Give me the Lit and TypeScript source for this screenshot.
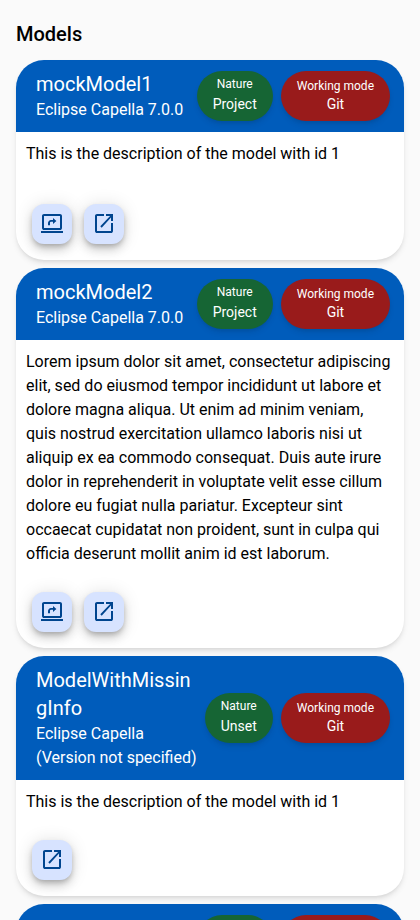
import { LitElement, html, css, svg } from "lit";
import { customElement, property } from "lit/decorators.js";

interface Model {
  name: string;
  tool: string;
  nature: string;
  mode: string;
  description: string;
  diagrams: boolean;
}

const LOREM =
  "Lorem ipsum dolor sit amet, consectetur adipiscing elit, sed do eiusmod tempor incididunt ut labore et dolore magna aliqua. Ut enim ad minim veniam, quis nostrud exercitation ullamco laboris nisi ut aliquip ex ea commodo consequat. Duis aute irure dolor in reprehenderit in voluptate velit esse cillum dolore eu fugiat nulla pariatur. Excepteur sint occaecat cupidatat non proident, sunt in culpa qui officia deserunt mollit anim id est laborum.";

const MODELS: Model[] = [
  { name: "mockModel1", tool: "Eclipse Capella 7.0.0", nature: "Project", mode: "Git", description: "This is the description of the model with id 1", diagrams: true },
  { name: "mockModel2", tool: "Eclipse Capella 7.0.0", nature: "Project", mode: "Git", description: LOREM, diagrams: true },
  { name: "ModelWithMissingInfo", tool: "Eclipse Capella (Version not specified)", nature: "Unset", mode: "Git", description: "This is the description of the model with id 1", diagrams: false },
  { name: "", tool: "", nature: "Project", mode: "Git", description: "", diagrams: false },
];

const screenShare = svg`<path d="M4 18q-.8 0-1.400-.6T2 16V4q0-.8.6-1.400T4 2h16q.8 0 1.400.6T22 4v12q0 .8-.6 1.400T20 18H4Zm0-2h16V4H4v12ZM1 21v-2h22v2H1ZM8 13.300h2v-2.500q0-.4.300-.7t.7-.3h2v2.200l3.400-3-3.400-3v2h-2q-1.250 0-2.120.88T8 11v2.300Z"/>`;
const openInNew = svg`<path d="M5 21q-.8 0-1.400-.6T3 19V4q0-.8.6-1.400T5 2h7v2H5v15h14v-8h2v8q0 .8-.6 1.400T19 21H5Zm4.700-5.300L8.300 14.300 18.100 4H14V2h7v7h-2V5.400L9.700 15.700Z"/>`;

@customElement("model-card")
export class ModelCard extends LitElement {
  @property({ attribute: false }) model!: Model;

  static styles = css`
    :host {
      display: flex;
      flex-direction: column;
      min-height: 200px;
      border-radius: 28px;
      overflow: hidden;
      background: #fff;
      box-shadow: 0 4px 6px -1px rgba(0, 0, 0, 0.1), 0 2px 4px -2px rgba(0, 0, 0, 0.1);
    }
    .header {
      display: flex;
      align-items: center;
      gap: 8px;
      min-height: 52px;
      padding: 10px 14px 10px 20px;
      background: #005cbb;
      color: #fff;
    }
    .heading {
      flex: 1;
      min-width: 0;
      overflow-wrap: anywhere;
    }
    .name {
      font-size: 20px;
      line-height: 28px;
    }
    .tool {
      font-size: 16px;
      line-height: 24px;
    }
    .pill {
      display: flex;
      flex-direction: column;
      align-items: center;
      justify-content: flex-end;
      box-sizing: border-box;
      height: 50px;
      padding: 0 16px 7px;
      border-radius: 25px;
      font-size: 14px;
      line-height: 20px;
      white-space: nowrap;
      box-shadow: 0 4px 6px -1px rgba(0, 0, 0, 0.1), 0 2px 4px -2px rgba(0, 0, 0, 0.1);
    }
    .label {
      font-size: 12px;
      line-height: 16px;
    }
    .nature {
      background: #166534;
    }
    .nature .label {
      margin-bottom: 2px;
    }
    .mode {
      background: #991b1b;
    }
    .description {
      flex: 1;
      padding: 10px;
      font-size: 16px;
      line-height: 24px;
      color: #000;
    }
    .actions {
      display: flex;
      gap: 12px;
      padding: 16px;
    }
    .action {
      display: grid;
      place-items: center;
      width: 40px;
      height: 40px;
      padding: 0;
      border: 0;
      border-radius: 12px;
      background: #d7e3ff;
      color: #00458f;
      box-shadow: 0 3px 5px -1px rgba(0, 0, 0, 0.2), 0 6px 10px rgba(0, 0, 0, 0.14), 0 1px 18px rgba(0, 0, 0, 0.12);
    }
    .icon {
      display: block;
      width: 24px;
      height: 24px;
      fill: currentColor;
    }
  `;

  private action(label: string, glyph: unknown) {
    return html`<button class="action" aria-label=${label}>
      <svg class="icon" viewBox="0 0 24 24">${glyph}</svg>
    </button>`;
  }

  render() {
    const m = this.model;
    return html`
      <div class="header">
        <div class="heading">
          <div class="name">${m.name}</div>
          <div class="tool">${m.tool}</div>
        </div>
        <div class="pill nature"><span class="label">Nature</span><span>${m.nature}</span></div>
        <div class="pill mode"><span class="label">Working mode</span><span>${m.mode}</span></div>
      </div>
      <div class="description">${m.description}</div>
      <div class="actions">
        ${m.diagrams ? this.action("View diagrams", screenShare) : null}
        ${this.action("Open", openInNew)}
      </div>
    `;
  }
}

@customElement("app-root")
export class AppRoot extends LitElement {
  static styles = css`
    :host {
      display: block;
      box-sizing: border-box;
      height: 920px;
      padding: 20px 16px 0;
      overflow: hidden;
      background: #fafafa;
      color: #000;
      font-family: Roboto, sans-serif;
    }
    .title {
      margin: 0 0 12px;
      font-size: 20px;
      font-weight: 500;
      line-height: 28px;
    }
    .list {
      display: flex;
      flex-direction: column;
      gap: 8px;
    }
  `;

  render() {
    return html`
      <h2 class="title">Models</h2>
      <div class="list">${MODELS.map((m) => html`<model-card .model=${m}></model-card>`)}</div>
    `;
  }
}
